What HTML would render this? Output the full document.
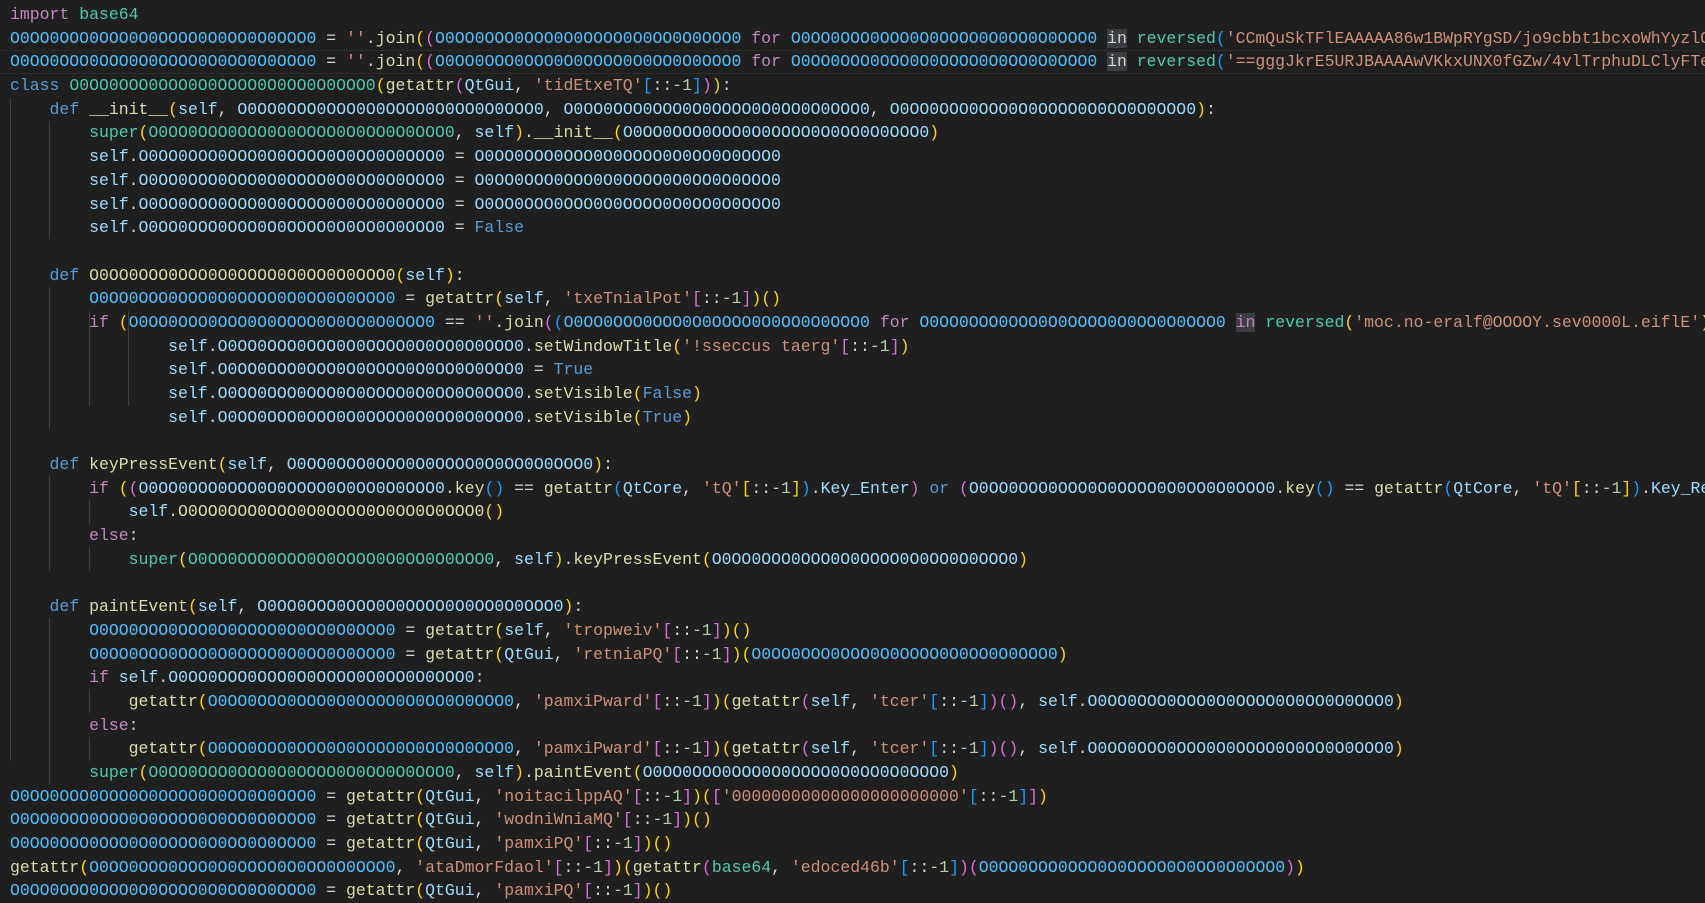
<!DOCTYPE html>
<html><head><meta charset="utf-8">
<style>
html,body{margin:0;padding:0;background:#1f1f1f;width:1705px;height:895px;overflow:hidden;}
#code{position:absolute;left:10px;top:3px;width:1695px;overflow:hidden;margin:0;font-family:"Liberation Mono",monospace;font-size:16.48px;line-height:23.68px;color:#d4d4d4;white-space:pre;}
.k{color:#569cd6}.c{color:#c586c0}.v{color:#4fc1ff}.a{color:#9cdcfe}.f{color:#dcdcaa}.t{color:#4ec9b0}.s{color:#ce9178}.n{color:#b5cea8}
.b1{color:#ffd700}.b2{color:#da70d6}.b3{color:#179fff}
.h{background:#3a3d41}
.g{position:absolute;width:1px;background:#404040}
.cur{position:absolute;left:0;width:1705px;height:22px;border-top:1px solid #2c2c2c;border-bottom:1px solid #2c2c2c}
</style></head><body>
<div class="cur" style="top:50px"></div>
<div class="g" style="left:10px;top:98px;height:663px"></div>
<div class="g" style="left:49px;top:121px;height:118px"></div>
<div class="g" style="left:49px;top:287px;height:142px"></div>
<div class="g" style="left:49px;top:476px;height:95px"></div>
<div class="g" style="left:49px;top:618px;height:166px"></div>
<div class="g" style="left:89px;top:311px;height:95px"></div>
<div class="g" style="left:128px;top:311px;height:95px"></div>
<div class="g" style="left:89px;top:500px;height:24px"></div>
<div class="g" style="left:89px;top:547px;height:24px"></div>
<div class="g" style="left:89px;top:689px;height:24px"></div>
<div class="g" style="left:89px;top:737px;height:24px"></div>
<pre id="code"><span class="c">import</span> <span class="t">base64</span>
<span class="v">O0OO0OOO0OOO0O0OOOO0O0OO0O0OOO0</span> = <span class="s">''</span>.<span class="f">join</span><span class="b1">(</span><span class="b2">(</span><span class="v">O0OO0OOO0OOO0O0OOOO0O0OO0O0OOO0</span> <span class="c">for</span> <span class="v">O0OO0OOO0OOO0O0OOOO0O0OO0O0OOO0</span> <span class="h">in</span> <span class="t">reversed</span><span class="b3">(</span><span class="s">'CCmQuSkTFlEAAAAA86w1BWpRYgSD/jo9cbbt1bcxoWhYyzlGbAAAAAElFTkSuQmCC'</span><span class="b3">)</span><span class="b2">)</span><span class="b1">)</span>
<span class="v">O0OO0OOO0OOO0O0OOOO0O0OO0O0OOO0</span> = <span class="s">''</span>.<span class="f">join</span><span class="b1">(</span><span class="b2">(</span><span class="v">O0OO0OOO0OOO0O0OOOO0O0OO0O0OOO0</span> <span class="c">for</span> <span class="v">O0OO0OOO0OOO0O0OOOO0O0OO0O0OOO0</span> <span class="h">in</span> <span class="t">reversed</span><span class="b3">(</span><span class="s">'==gggJkrE5URJBAAAAwVKkxUNX0fGZw/4vlTrphuDLClyFTeOYAAAAA'</span><span class="b3">)</span><span class="b2">)</span><span class="b1">)</span>
<span class="k">class</span> <span class="t">O0OO0OOO0OOO0O0OOOO0O0OO0O0OOO0</span><span class="b1">(</span><span class="f">getattr</span><span class="b2">(</span><span class="a">QtGui</span>, <span class="s">'tidEtxeTQ'</span><span class="b3">[</span>::<span class="n">-1</span><span class="b3">]</span><span class="b2">)</span><span class="b1">)</span>:
    <span class="k">def</span> <span class="f">__init__</span><span class="b1">(</span><span class="a">self</span>, <span class="a">O0OO0OOO0OOO0O0OOOO0O0OO0O0OOO0</span>, <span class="a">O0OO0OOO0OOO0O0OOOO0O0OO0O0OOO0</span>, <span class="a">O0OO0OOO0OOO0O0OOOO0O0OO0O0OOO0</span><span class="b1">)</span>:
        <span class="t">super</span><span class="b1">(</span><span class="t">O0OO0OOO0OOO0O0OOOO0O0OO0O0OOO0</span>, <span class="a">self</span><span class="b1">)</span>.<span class="f">__init__</span><span class="b1">(</span><span class="a">O0OO0OOO0OOO0O0OOOO0O0OO0O0OOO0</span><span class="b1">)</span>
        <span class="a">self</span>.<span class="a">O0OO0OOO0OOO0O0OOOO0O0OO0O0OOO0</span> = <span class="a">O0OO0OOO0OOO0O0OOOO0O0OO0O0OOO0</span>
        <span class="a">self</span>.<span class="a">O0OO0OOO0OOO0O0OOOO0O0OO0O0OOO0</span> = <span class="a">O0OO0OOO0OOO0O0OOOO0O0OO0O0OOO0</span>
        <span class="a">self</span>.<span class="a">O0OO0OOO0OOO0O0OOOO0O0OO0O0OOO0</span> = <span class="a">O0OO0OOO0OOO0O0OOOO0O0OO0O0OOO0</span>
        <span class="a">self</span>.<span class="a">O0OO0OOO0OOO0O0OOOO0O0OO0O0OOO0</span> = <span class="k">False</span>

    <span class="k">def</span> <span class="f">O0OO0OOO0OOO0O0OOOO0O0OO0O0OOO0</span><span class="b1">(</span><span class="a">self</span><span class="b1">)</span>:
        <span class="v">O0OO0OOO0OOO0O0OOOO0O0OO0O0OOO0</span> = <span class="f">getattr</span><span class="b1">(</span><span class="a">self</span>, <span class="s">'txeTnialPot'</span><span class="b2">[</span>::<span class="n">-1</span><span class="b2">]</span><span class="b1">)</span><span class="b1">()</span>
        <span class="c">if</span> <span class="b1">(</span><span class="v">O0OO0OOO0OOO0O0OOOO0O0OO0O0OOO0</span> == <span class="s">''</span>.<span class="f">join</span><span class="b2">(</span><span class="b3">(</span><span class="v">O0OO0OOO0OOO0O0OOOO0O0OO0O0OOO0</span> <span class="c">for</span> <span class="v">O0OO0OOO0OOO0O0OOOO0O0OO0O0OOO0</span> <span class="h c">in</span> <span class="t">reversed</span><span class="b1">(</span><span class="s">'moc.no-eralf@OOOOY.sev0000L.eiflE'</span><span class="b1">)</span><span class="b3">)</span><span class="b2">)</span><span class="b1">)</span>:
                <span class="a">self</span>.<span class="a">O0OO0OOO0OOO0O0OOOO0O0OO0O0OOO0</span>.<span class="f">setWindowTitle</span><span class="b1">(</span><span class="s">'!sseccus taerg'</span><span class="b2">[</span>::<span class="n">-1</span><span class="b2">]</span><span class="b1">)</span>
                <span class="a">self</span>.<span class="a">O0OO0OOO0OOO0O0OOOO0O0OO0O0OOO0</span> = <span class="k">True</span>
                <span class="a">self</span>.<span class="a">O0OO0OOO0OOO0O0OOOO0O0OO0O0OOO0</span>.<span class="f">setVisible</span><span class="b1">(</span><span class="k">False</span><span class="b1">)</span>
                <span class="a">self</span>.<span class="a">O0OO0OOO0OOO0O0OOOO0O0OO0O0OOO0</span>.<span class="f">setVisible</span><span class="b1">(</span><span class="k">True</span><span class="b1">)</span>

    <span class="k">def</span> <span class="f">keyPressEvent</span><span class="b1">(</span><span class="a">self</span>, <span class="a">O0OO0OOO0OOO0O0OOOO0O0OO0O0OOO0</span><span class="b1">)</span>:
        <span class="c">if</span> <span class="b1">(</span><span class="b2">(</span><span class="a">O0OO0OOO0OOO0O0OOOO0O0OO0O0OOO0</span>.<span class="f">key</span><span class="b3">()</span> == <span class="f">getattr</span><span class="b3">(</span><span class="a">QtCore</span>, <span class="s">'tQ'</span><span class="b1">[</span>::<span class="n">-1</span><span class="b1">]</span><span class="b3">)</span>.<span class="a">Key_Enter</span><span class="b2">)</span> <span class="k">or</span> <span class="b2">(</span><span class="a">O0OO0OOO0OOO0O0OOOO0O0OO0O0OOO0</span>.<span class="f">key</span><span class="b3">()</span> == <span class="f">getattr</span><span class="b3">(</span><span class="a">QtCore</span>, <span class="s">'tQ'</span><span class="b1">[</span>::<span class="n">-1</span><span class="b1">]</span><span class="b3">)</span>.<span class="a">Key_Return</span><span class="b2">)</span><span class="b1">)</span>:
            <span class="a">self</span>.<span class="f">O0OO0OOO0OOO0O0OOOO0O0OO0O0OOO0</span><span class="b1">()</span>
        <span class="c">else</span>:
            <span class="t">super</span><span class="b1">(</span><span class="t">O0OO0OOO0OOO0O0OOOO0O0OO0O0OOO0</span>, <span class="a">self</span><span class="b1">)</span>.<span class="f">keyPressEvent</span><span class="b1">(</span><span class="a">O0OO0OOO0OOO0O0OOOO0O0OO0O0OOO0</span><span class="b1">)</span>

    <span class="k">def</span> <span class="f">paintEvent</span><span class="b1">(</span><span class="a">self</span>, <span class="a">O0OO0OOO0OOO0O0OOOO0O0OO0O0OOO0</span><span class="b1">)</span>:
        <span class="v">O0OO0OOO0OOO0O0OOOO0O0OO0O0OOO0</span> = <span class="f">getattr</span><span class="b1">(</span><span class="a">self</span>, <span class="s">'tropweiv'</span><span class="b2">[</span>::<span class="n">-1</span><span class="b2">]</span><span class="b1">)</span><span class="b1">()</span>
        <span class="v">O0OO0OOO0OOO0O0OOOO0O0OO0O0OOO0</span> = <span class="f">getattr</span><span class="b1">(</span><span class="a">QtGui</span>, <span class="s">'retniaPQ'</span><span class="b2">[</span>::<span class="n">-1</span><span class="b2">]</span><span class="b1">)</span><span class="b1">(</span><span class="v">O0OO0OOO0OOO0O0OOOO0O0OO0O0OOO0</span><span class="b1">)</span>
        <span class="c">if</span> <span class="a">self</span>.<span class="a">O0OO0OOO0OOO0O0OOOO0O0OO0O0OOO0</span>:
            <span class="f">getattr</span><span class="b1">(</span><span class="v">O0OO0OOO0OOO0O0OOOO0O0OO0O0OOO0</span>, <span class="s">'pamxiPward'</span><span class="b2">[</span>::<span class="n">-1</span><span class="b2">]</span><span class="b1">)</span><span class="b1">(</span><span class="f">getattr</span><span class="b2">(</span><span class="a">self</span>, <span class="s">'tcer'</span><span class="b3">[</span>::<span class="n">-1</span><span class="b3">]</span><span class="b2">)</span><span class="b2">()</span>, <span class="a">self</span>.<span class="a">O0OO0OOO0OOO0O0OOOO0O0OO0O0OOO0</span><span class="b1">)</span>
        <span class="c">else</span>:
            <span class="f">getattr</span><span class="b1">(</span><span class="v">O0OO0OOO0OOO0O0OOOO0O0OO0O0OOO0</span>, <span class="s">'pamxiPward'</span><span class="b2">[</span>::<span class="n">-1</span><span class="b2">]</span><span class="b1">)</span><span class="b1">(</span><span class="f">getattr</span><span class="b2">(</span><span class="a">self</span>, <span class="s">'tcer'</span><span class="b3">[</span>::<span class="n">-1</span><span class="b3">]</span><span class="b2">)</span><span class="b2">()</span>, <span class="a">self</span>.<span class="a">O0OO0OOO0OOO0O0OOOO0O0OO0O0OOO0</span><span class="b1">)</span>
        <span class="t">super</span><span class="b1">(</span><span class="t">O0OO0OOO0OOO0O0OOOO0O0OO0O0OOO0</span>, <span class="a">self</span><span class="b1">)</span>.<span class="f">paintEvent</span><span class="b1">(</span><span class="a">O0OO0OOO0OOO0O0OOOO0O0OO0O0OOO0</span><span class="b1">)</span>
<span class="v">O0OO0OOO0OOO0O0OOOO0O0OO0O0OOO0</span> = <span class="f">getattr</span><span class="b1">(</span><span class="a">QtGui</span>, <span class="s">'noitacilppAQ'</span><span class="b2">[</span>::<span class="n">-1</span><span class="b2">]</span><span class="b1">)</span><span class="b1">(</span><span class="b2">[</span><span class="s">'00000000000000000000000'</span><span class="b3">[</span>::<span class="n">-1</span><span class="b3">]</span><span class="b2">]</span><span class="b1">)</span>
<span class="v">O0OO0OOO0OOO0O0OOOO0O0OO0O0OOO0</span> = <span class="f">getattr</span><span class="b1">(</span><span class="a">QtGui</span>, <span class="s">'wodniWniaMQ'</span><span class="b2">[</span>::<span class="n">-1</span><span class="b2">]</span><span class="b1">)</span><span class="b1">()</span>
<span class="v">O0OO0OOO0OOO0O0OOOO0O0OO0O0OOO0</span> = <span class="f">getattr</span><span class="b1">(</span><span class="a">QtGui</span>, <span class="s">'pamxiPQ'</span><span class="b2">[</span>::<span class="n">-1</span><span class="b2">]</span><span class="b1">)</span><span class="b1">()</span>
<span class="f">getattr</span><span class="b1">(</span><span class="v">O0OO0OOO0OOO0O0OOOO0O0OO0O0OOO0</span>, <span class="s">'ataDmorFdaol'</span><span class="b2">[</span>::<span class="n">-1</span><span class="b2">]</span><span class="b1">)</span><span class="b1">(</span><span class="f">getattr</span><span class="b2">(</span><span class="t">base64</span>, <span class="s">'edoced46b'</span><span class="b3">[</span>::<span class="n">-1</span><span class="b3">]</span><span class="b2">)</span><span class="b2">(</span><span class="v">O0OO0OOO0OOO0O0OOOO0O0OO0O0OOO0</span><span class="b2">)</span><span class="b1">)</span>
<span class="v">O0OO0OOO0OOO0O0OOOO0O0OO0O0OOO0</span> = <span class="f">getattr</span><span class="b1">(</span><span class="a">QtGui</span>, <span class="s">'pamxiPQ'</span><span class="b2">[</span>::<span class="n">-1</span><span class="b2">]</span><span class="b1">)</span><span class="b1">()</span></pre>
</body></html>
